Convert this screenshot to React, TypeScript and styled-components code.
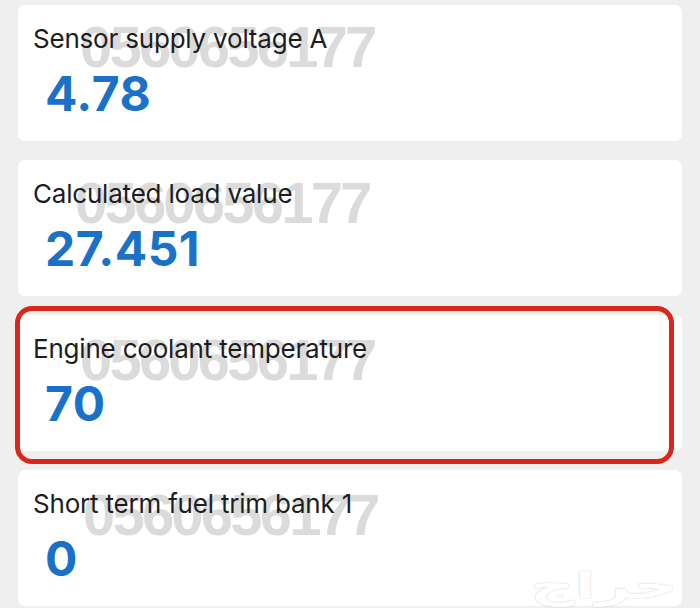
import React from 'react'
import styled, { createGlobalStyle } from 'styled-components'

type Reading = {
    id: string
    label: string
    value: string
    marked?: boolean
    wm: [number, number]
}

const readings: Reading[] = [
    { id: 'vsa', label: 'Sensor supply voltage A', value: '4.78', wm: [62, 13] },
    { id: 'load', label: 'Calculated load value', value: '27.451', wm: [57, 14] },
    { id: 'ect', label: 'Engine coolant temperature', value: '70', marked: true, wm: [62, 16] },
    { id: 'stft', label: 'Short term fuel trim bank 1', value: '0', wm: [65, 16] },
]

const GlobalStyle = createGlobalStyle`
    html, body {
        margin: 0;
        padding: 0;
        background: #efefef;
    }
    body {
        font-family: Inter, "Noto Sans", sans-serif;
        overflow: hidden;
    }
`

export default function App() {
    return (
        <>
            <GlobalStyle />
            <Page>
                {readings.map((r) => (
                    <Card key={r.id}>
                        <Watermark style={{ left: r.wm[0], top: r.wm[1] }}>
                            0560656177
                        </Watermark>
                        <Label>{r.label}</Label>
                        <Value>{r.value}</Value>
                        {r.marked ? <Highlight /> : null}
                    </Card>
                ))}
                <SiteMark>حراج</SiteMark>
            </Page>
        </>
    )
}

const Page = styled.div`
    position: relative;
    width: 700px;
    height: 608px;
    padding: 5px 18px 0 18px;
    box-sizing: border-box;
    display: flex;
    flex-direction: column;
    gap: 19px;
`
const Card = styled.div`
    position: relative;
    height: 136px;
    flex-shrink: 0;
    background: #ffffff;
    border-radius: 7px;
    padding: 18px 15px 0 15px;
    box-sizing: border-box;
    display: flex;
    flex-direction: column;
`
const Watermark = styled.div`
    position: absolute;
    font-family: 'Liberation Sans', Arial, sans-serif;
    font-size: 58px;
    font-weight: 700;
    letter-spacing: -2.8px;
    line-height: 1;
    color: rgba(170, 170, 170, 0.42);
    pointer-events: none;
    white-space: nowrap;
`
const Label = styled.div`
    position: relative;
    font-size: 26px;
    line-height: 32px;
    color: #1d1d1f;
    letter-spacing: -0.2px;
`
const Value = styled.div`
    position: relative;
    margin-top: 11px;
    padding-left: 12px;
    font-size: 48px;
    font-weight: 700;
    line-height: 56px;
    color: #1a72c8;
    letter-spacing: 0.5px;
`
const Highlight = styled.div`
    position: absolute;
    left: -3px;
    right: 8px;
    top: -9px;
    bottom: -13px;
    border: 5px solid #d8281b;
    border-radius: 17px;
    pointer-events: none;
`
const SiteMark = styled.div`
    position: absolute;
    right: 22px;
    bottom: 2px;
    font-family: 'DejaVu Sans', sans-serif;
    font-size: 36px;
    font-weight: 700;
    color: #ffffff;
    transform: scaleX(1.7);
    transform-origin: right bottom;
    text-shadow: 0 0 1px rgba(0, 0, 0, 0.3);
    opacity: 0.9;
`
